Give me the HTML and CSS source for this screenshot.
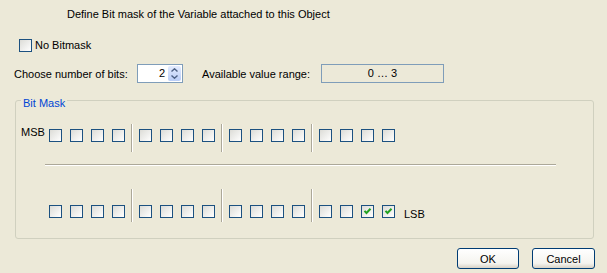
FILE: index.html
```html
<!DOCTYPE html>
<html>
<head>
  <title>Bit Mask</title>
  <link rel="stylesheet" href="styles.css">
</head>
<body>
<div class="dialog">
  <p class="title">Define Bit mask of the Variable attached to this Object</p>

  <div class="row no-mask">
    <span class="check"></span>
    <span class="check-label">No Bitmask</span>
  </div>

  <div class="row bits">
    <span class="bits-label">Choose number of bits:</span>
    <div class="spinner">
      <span class="spin-value">2</span>
      <span class="spin-btn">
        <span class="spin-half"><svg width="7" height="4" viewBox="0 0 7 4"><polyline points="0.5,3.5 3.5,0.8 6.5,3.5"/></svg></span>
        <span class="spin-half"><svg width="7" height="4" viewBox="0 0 7 4"><polyline points="0.5,0.5 3.5,3.2 6.5,0.5"/></svg></span>
      </span>
    </div>
    <span class="range-label">Available value range:</span>
    <div class="range">0 … 3</div>
  </div>

  <div class="group">
    <span class="group-title">Bit Mask</span>

    <div class="mask-row msb">
      <span class="side-label">MSB</span>
      <div class="nibble"><span class="check"></span><span class="check"></span><span class="check"></span><span class="check"></span></div>
      <span class="sep"></span>
      <div class="nibble"><span class="check"></span><span class="check"></span><span class="check"></span><span class="check"></span></div>
      <span class="sep"></span>
      <div class="nibble"><span class="check"></span><span class="check"></span><span class="check"></span><span class="check"></span></div>
      <span class="sep"></span>
      <div class="nibble"><span class="check"></span><span class="check"></span><span class="check"></span><span class="check"></span></div>
    </div>

    <div class="divider"></div>

    <div class="mask-row lsb">
      <div class="nibble"><span class="check"></span><span class="check"></span><span class="check"></span><span class="check"></span></div>
      <span class="sep"></span>
      <div class="nibble"><span class="check"></span><span class="check"></span><span class="check"></span><span class="check"></span></div>
      <span class="sep"></span>
      <div class="nibble"><span class="check"></span><span class="check"></span><span class="check"></span><span class="check"></span></div>
      <span class="sep"></span>
      <div class="nibble">
        <span class="check"></span><span class="check"></span>
        <span class="check on"><svg width="11" height="11" viewBox="0 0 11 11"><polyline points="2.5,4.8 4.5,7 8.5,2.8"/></svg></span>
        <span class="check on"><svg width="11" height="11" viewBox="0 0 11 11"><polyline points="2.5,4.8 4.5,7 8.5,2.8"/></svg></span>
      </div>
      <span class="side-label lsb-label">LSB</span>
    </div>
  </div>

  <div class="actions">
    <button class="btn ok">OK</button>
    <button class="btn cancel">Cancel</button>
  </div>
</div>
</body>
</html>
```

FILE: styles.css
```css
body {
  margin: 0;
  background: #ECE9D8;
  font-family: "Liberation Sans", Arial, sans-serif;
  font-size: 11px;
  color: #000;
}

.dialog {
  width: 607px;
  height: 273px;
  overflow: hidden;
}

.title {
  margin: 0;
  padding: 8px 0 0 67px;
  line-height: 13px;
}

.row {
  display: flex;
  align-items: center;
}

/* checkbox, xp look */
.check {
  display: flex;
  align-items: center;
  justify-content: center;
  flex: none;
  width: 13px;
  height: 13px;
  box-sizing: border-box;
  border: 1px solid #1C5180;
  background: linear-gradient(135deg, #DCDCD7, #FFFFFF);
}

.check svg polyline {
  fill: none;
  stroke: #21A121;
  stroke-width: 2;
}

.no-mask {
  margin-top: 18px;
  padding-left: 19px;
  height: 13px;
}

.check-label {
  margin-left: 3px;
  line-height: 13px;
}

.bits {
  margin-top: 12px;
  padding-left: 14px;
  height: 19px;
}

.bits-label {
  width: 123px;
}

.spinner {
  display: flex;
  justify-content: flex-end;
  align-items: center;
  width: 46px;
  height: 19px;
  box-sizing: border-box;
  border: 1px solid #7F9DB9;
  background: #fff;
  padding-right: 1px;
}

.spin-value {
  padding-right: 3px;
  line-height: 13px;
}

.spin-btn {
  display: flex;
  flex-direction: column;
  width: 13px;
  height: 15px;
  border-radius: 2px;
  background: linear-gradient(#E3EBFE, #B9CDF7);
}

.spin-half {
  flex: 1;
  display: flex;
  align-items: center;
  justify-content: center;
}

.spin-half polyline {
  fill: none;
  stroke: #4D6185;
  stroke-width: 1.4;
}

.range-label {
  margin-left: 19px;
  width: 119px;
}

.range {
  width: 123px;
  height: 19px;
  box-sizing: border-box;
  border: 1px solid #7F9DB9;
  text-align: center;
  line-height: 17px;
}

/* group box */
.group {
  position: relative;
  margin: 17px 13px 0 15px;
  height: 139px;
  box-sizing: border-box;
  border: 1px solid #D0D0BF;
  border-radius: 3px;
}

.group-title {
  position: absolute;
  top: -4px;
  left: 5px;
  padding: 0 2px;
  line-height: 13px;
  color: #0046D5;
  background: #ECE9D8;
}

.mask-row {
  display: flex;
  align-items: flex-start;
}

.msb {
  margin-top: 23px;
  height: 28px;
  padding-left: 5px;
}

.msb .check {
  margin-top: 5px;
}

.lsb {
  margin-top: 23px;
  height: 33px;
  padding-left: 33px;
}

.lsb .check {
  margin-top: 16px;
}

.side-label {
  width: 28px;
  margin-top: 2px;
  line-height: 13px;
}

.lsb-label {
  margin: 19px 0 0 9px;
}

.nibble {
  display: flex;
  gap: 8px;
}

.sep {
  align-self: stretch;
  width: 1px;
  background: #ACA899;
  border-right: 1px solid #fff;
  margin: 0 6px;
}

.divider {
  margin: 12px 0 0 29px;
  width: 511px;
  height: 1px;
  background: #ACA899;
  border-bottom: 1px solid #fff;
}

.actions {
  display: flex;
  justify-content: flex-end;
  gap: 13px;
  margin: 9px 12px 0 0;
}

.btn {
  width: 62px;
  height: 21px;
  box-sizing: border-box;
  padding: 0;
  border: 1px solid #003C74;
  border-radius: 3px;
  background: linear-gradient(#FFFFFF, #F5F4EF 75%, #D8D2C6);
  font: inherit;
  color: #000;
}

.btn.cancel {
  width: 63px;
}
```
